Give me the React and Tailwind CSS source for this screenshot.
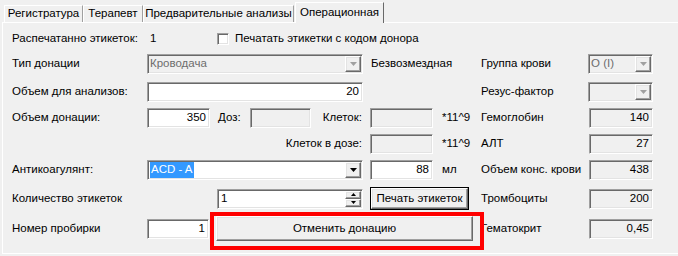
import React from 'react'

const sunken =
  'border border-t-[#a0a0a0] border-l-[#a0a0a0] border-r-white border-b-white shadow-[inset_1px_1px_0_#696969,inset_-1px_-1px_0_#e3e3e3]'
const raised =
  'border border-t-white border-l-white border-r-[#696969] border-b-[#696969] shadow-[inset_-1px_-1px_0_#a0a0a0,inset_1px_1px_0_#e3e3e3] bg-[#f0f0f0]'

function Arrow({ color = '#000' }) {
  return (
    <svg width="7" height="4" viewBox="0 0 7 4">
      <path d="M0 0h7L3.5 4z" fill={color} />
    </svg>
  )
}

function Field({ className = '', value = '', disabled = false }) {
  return (
    <div
      className={`${sunken} ${disabled ? 'bg-[#f0f0f0]' : 'bg-white'} h-[20px] shrink-0 flex items-center justify-end pr-[3px] ${className}`}
    >
      {value}
    </div>
  )
}

function Combo({ className = '', disabled = false, children }) {
  return (
    <div
      className={`${sunken} ${disabled ? 'bg-[#f0f0f0] text-[#6d6d6d]' : 'bg-white'} h-[20px] shrink-0 flex items-center pl-[2px] pr-[1px] ${className}`}
    >
      <div className="flex-1 flex items-center">{children}</div>
      <div className={`${raised} w-[16px] h-[16px] flex items-center justify-center`}>
        <Arrow color={disabled ? '#a0a0a0' : '#000'} />
      </div>
    </div>
  )
}

const tab =
  'h-[17px] flex items-center justify-center whitespace-nowrap border-t border-l border-r border-t-white border-l-white border-r-[#a0a0a0]'

export default function App() {
  return (
    <div className="relative w-[678px] h-[256px] overflow-hidden bg-[#f0f0f0] text-[11.5px] leading-none text-black font-['Liberation_Sans',Arial,sans-serif]">
      {/* tabs */}
      <div className="flex items-end h-[22px] pl-[4px]">
        <div className={`${tab} w-[79px]`}>Регистратура</div>
        <div className={`${tab} w-[60px]`}>Терапевт</div>
        <div className={`${tab} w-[151px]`}>Предварительные анализы</div>
        <div className="relative z-10 w-[89px] h-[21px] -mb-px ml-px flex items-center justify-center whitespace-nowrap bg-[#f0f0f0] border-t border-l border-r border-t-white border-l-white border-r-[#696969]">
          Операционная
        </div>
      </div>

      {/* panel */}
      <div className="ml-[2px] h-[232px] pl-[9px] border-t border-l border-b border-t-white border-l-white border-b-white flex flex-col">
        {/* row 1 */}
        <div className="mt-[9px] h-[14px] flex items-center">
          <div className="w-[138px]">Распечатанно этикеток:</div>
          <div className="w-[67px]">1</div>
          <div className={`${sunken} bg-white w-[12px] h-[12px]`} />
          <div className="ml-[6px]">Печатать этикетки с кодом донора</div>
        </div>

        {/* row 2 */}
        <div className="mt-[8px] h-[20px] flex items-center">
          <div className="w-[135px]">Тип донации</div>
          <Combo className="w-[216px]" disabled>
            Кроводача
          </Combo>
          <div className="ml-[8px] w-[110px]">Безвозмездная</div>
          <div className="w-[107px]">Группа крови</div>
          <Combo className="w-[65px]" disabled>
            O (I)
          </Combo>
        </div>

        {/* row 3 */}
        <div className="mt-[8px] h-[20px] flex items-center">
          <div className="w-[135px]">Объем для анализов:</div>
          <Field className="w-[216px]" value="20" />
          <div className="w-[118px]" />
          <div className="w-[107px]">Резус-фактор</div>
          <Combo className="w-[65px]" disabled />
        </div>

        {/* row 4 */}
        <div className="mt-[6px] h-[20px] flex items-center">
          <div className="w-[135px]">Объем донации:</div>
          <Field className="w-[63px]" value="350" />
          <div className="w-[40px] pl-[8px]">Доз:</div>
          <Field className="w-[61px]" disabled />
          <div className="w-[52px] text-right pr-[1px]">Клеток:</div>
          <Field className="ml-[7px] w-[63px]" disabled />
          <div className="w-[48px] pl-[9px]">*11^9</div>
          <div className="w-[108px]">Гемоглобин</div>
          <Field className="w-[64px]" value="140" disabled />
        </div>

        {/* row 5 */}
        <div className="mt-[6px] h-[20px] flex items-center">
          <div className="w-[351px] text-right pr-[1px]">Клеток в дозе:</div>
          <Field className="ml-[7px] w-[63px]" disabled />
          <div className="w-[48px] pl-[9px]">*11^9</div>
          <div className="w-[108px]">АЛТ</div>
          <Field className="w-[64px]" value="27" disabled />
        </div>

        {/* row 6 */}
        <div className="mt-[6px] h-[20px] flex items-center">
          <div className="w-[135px]">Антикоагулянт:</div>
          <Combo className="w-[216px]">
            <span className="bg-[#3399ff] text-white px-[1px] py-[2px]">ACD - A</span>
          </Combo>
          <Field className="ml-[7px] w-[63px]" value="88" />
          <div className="w-[48px] pl-[9px]">мл</div>
          <div className="w-[108px]">Объем конс. крови</div>
          <Field className="w-[64px]" value="438" disabled />
        </div>

        {/* row 7 */}
        <div className="mt-[7px] h-[23px] flex items-center">
          <div className="w-[205px]">Количество этикеток</div>
          <div className={`${sunken} bg-white w-[146px] h-[20px] shrink-0 flex items-center pl-[3px] pr-[1px]`}>
            <div className="flex-1">1</div>
            <div className="flex flex-col w-[16px] h-[16px]">
              <div className={`${raised} h-[8px] flex items-center justify-center`}>
                <svg width="5" height="3" viewBox="0 0 5 3">
                  <path d="M2.5 0L5 3H0z" fill="#000" />
                </svg>
              </div>
              <div className={`${raised} h-[8px] flex items-center justify-center`}>
                <svg width="5" height="3" viewBox="0 0 5 3">
                  <path d="M0 0h5L2.5 3z" fill="#000" />
                </svg>
              </div>
            </div>
          </div>
          <div className="ml-[7px] w-[99px] h-[23px] border border-black shrink-0">
            <div className={`${raised} w-full h-full flex items-center justify-center`}>Печать этикеток</div>
          </div>
          <div className="ml-[12px] w-[108px]">Тромбоциты</div>
          <Field className="w-[64px]" value="200" disabled />
        </div>

        {/* row 8 */}
        <div className="mt-[5px] h-[27px] flex items-center">
          <div className="w-[135px]">Номер пробирки</div>
          <Field className="w-[62px]" value="1" />
          <div className={`${raised} ml-[7px] w-[257px] h-[25px] shrink-0 flex items-center justify-center`}>
            Отменить донацию
          </div>
          <div className="ml-[8px] w-[108px]">Гематокрит</div>
          <Field className="w-[64px]" value="0,45" disabled />
        </div>
      </div>

      {/* highlight annotation */}
      <div className="absolute left-[210px] top-[212px] w-[274px] h-[38px] border-4 border-[#ff0000]" />
    </div>
  )
}
